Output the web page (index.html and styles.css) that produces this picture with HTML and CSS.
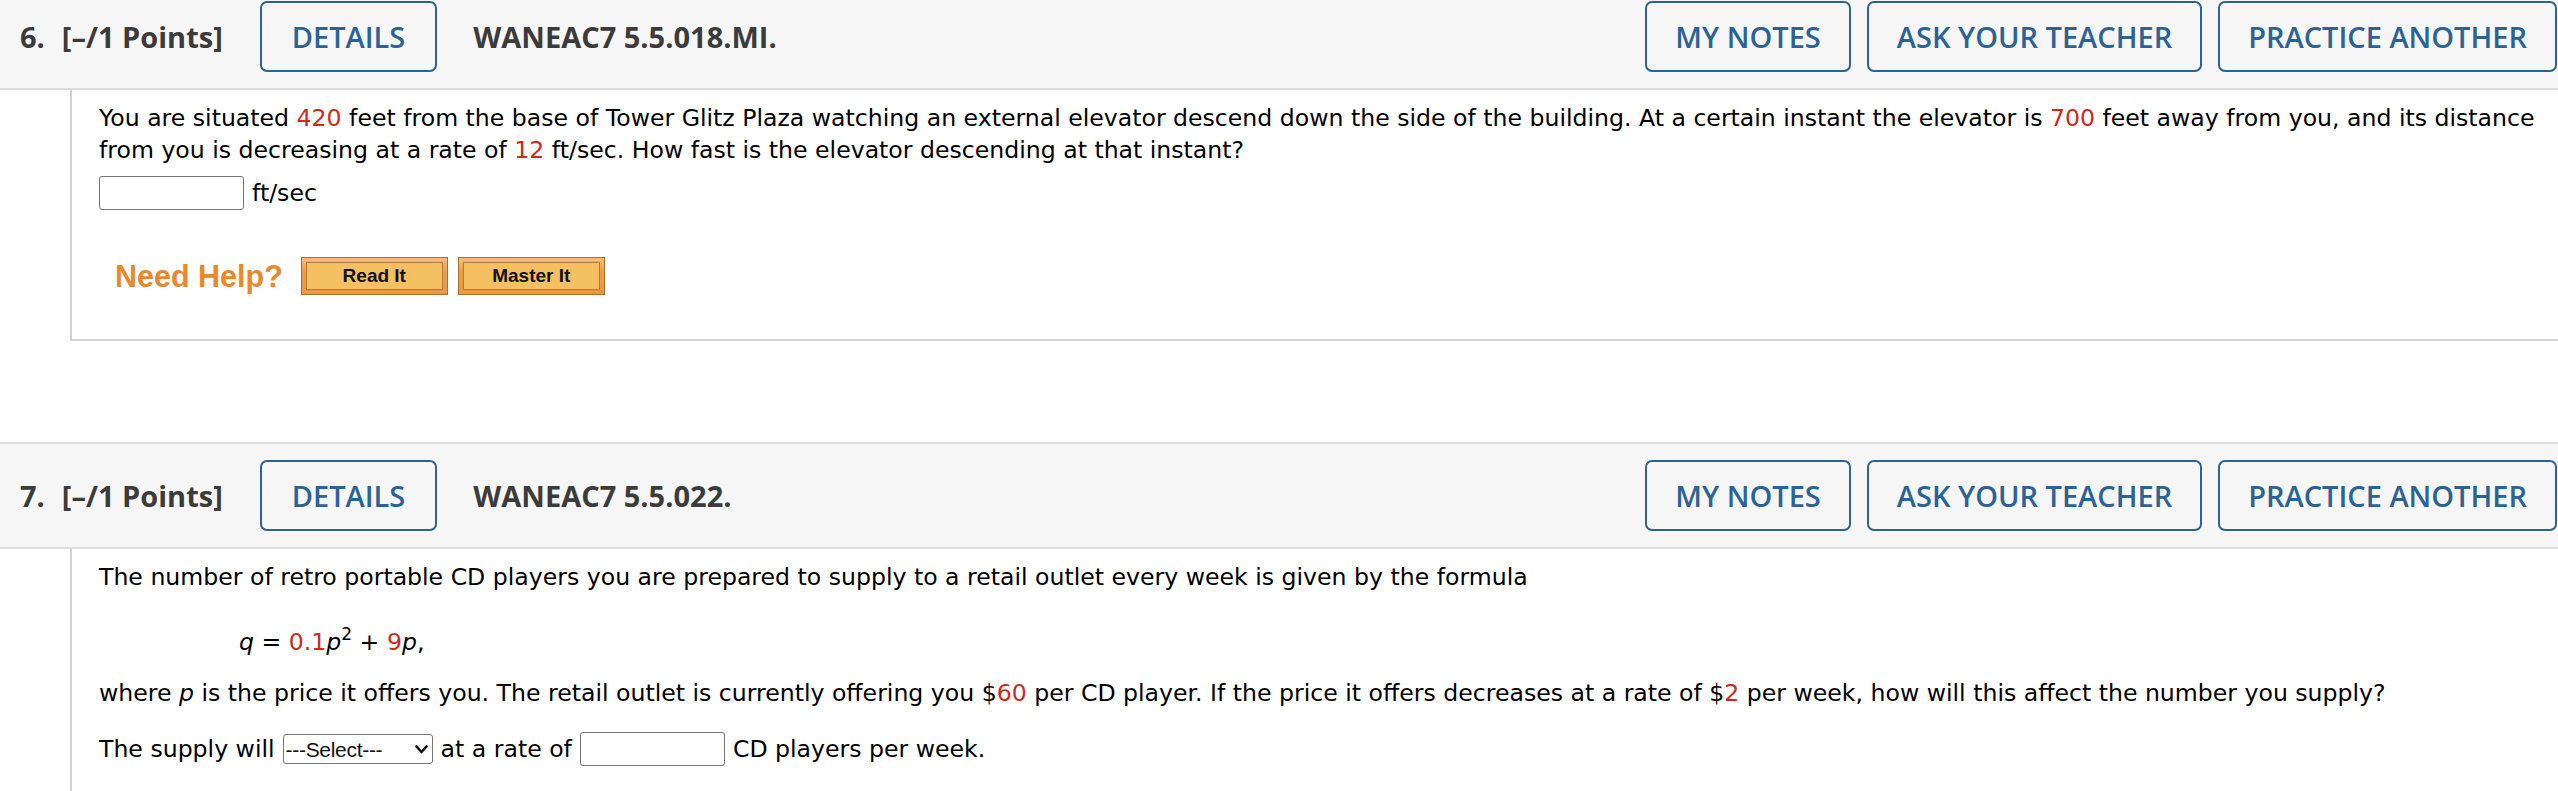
FILE: index.html
```html
<!DOCTYPE html>
<html>
<head>
<meta charset="utf-8">
<link rel="stylesheet" href="styles.css">
</head>
<body>
<div class="page">
  <section class="question first">
    <div class="qhead">
      <span class="qnum">6.</span>
      <span class="qpts">[–/1 Points]</span>
      <button class="hbtn">DETAILS</button>
      <span class="qid">WANEAC7 5.5.018.MI.</span>
      <div class="hright">
        <button class="hbtn">MY NOTES</button>
        <button class="hbtn">ASK YOUR TEACHER</button>
        <button class="hbtn">PRACTICE ANOTHER</button>
      </div>
    </div>
    <div class="qbody closed">
      <p class="txt">You are situated <span class="red">420</span> feet from the base of Tower Glitz Plaza watching an external elevator descend down the side of the building. At a certain instant the elevator is <span class="red">700</span> feet away from you, and its distance from you is decreasing at a rate of <span class="red">12</span> ft/sec. How fast is the elevator descending at that instant?</p>
      <div class="answer-row">
        <input class="ans" type="text">
        <span class="unit">ft/sec</span>
      </div>
      <div class="help-row">
        <span class="need">Need Help?</span>
        <span class="helpbtn"><span class="helpin">Read It</span></span>
        <span class="helpbtn"><span class="helpin">Master It</span></span>
      </div>
    </div>
  </section>

  <section class="question second">
    <div class="qhead">
      <span class="qnum">7.</span>
      <span class="qpts">[–/1 Points]</span>
      <button class="hbtn">DETAILS</button>
      <span class="qid">WANEAC7 5.5.022.</span>
      <div class="hright">
        <button class="hbtn">MY NOTES</button>
        <button class="hbtn">ASK YOUR TEACHER</button>
        <button class="hbtn">PRACTICE ANOTHER</button>
      </div>
    </div>
    <div class="qbody">
      <p class="txt p1">The number of retro portable CD players you are prepared to supply to a retail outlet every week is given by the formula</p>
      <div class="txt formula"><i>q</i> = <span class="red">0.1</span><i>p</i><sup>2</sup> + <span class="red">9</span><i>p</i>,</div>
      <p class="txt p3">where <i>p</i> is the price it offers you. The retail outlet is currently offering you $<span class="red">60</span> per CD player. If the price it offers decreases at a rate of $<span class="red">2</span> per week, how will this affect the number you supply?</p>
      <div class="supply-row">
        <span>The supply will</span>
        <span class="selwrap">
          <select class="sel"><option>---Select---</option><option>increase</option><option>decrease</option></select>
          <svg class="chev" width="13" height="9" viewBox="0 0 13 9"><path d="M1.5 1.5 L6.5 7 L11.5 1.5" fill="none" stroke="#111" stroke-width="2.6" stroke-linecap="round" stroke-linejoin="round"/></svg>
        </span>
        <span>at a rate of</span>
        <input class="ans" type="text">
        <span>CD players per week.</span>
      </div>
    </div>
  </section>
</div>
</body>
</html>
```

FILE: styles.css
```css
html, body {
  margin: 0;
  padding: 0;
  background: #ffffff;
}
body {
  overflow: hidden;
}
.page {
  width: 2558px;
}
.question.first {
  margin-top: -17px;
}
.question.second {
  margin-top: 101px;
}
.qhead {
  box-sizing: border-box;
  height: 107px;
  display: flex;
  align-items: center;
  background: #f6f6f6;
  border-top: 2px solid #dedede;
  border-bottom: 2px solid #dedede;
  padding: 0 1px 0 20px;
  font-family: "Open Sans", "Liberation Sans", sans-serif;
  color: #3b3b3b;
  font-size: 29px;
  font-weight: 700;
}
.qnum {
  margin-right: 17px;
}
.qpts {
  margin-right: 37px;
}
.qid {
  margin-left: 36px;
}
.hbtn {
  box-sizing: border-box;
  height: 71px;
  padding: 0 30px;
  border: 2px solid #2c6397;
  border-radius: 7px;
  background: transparent;
  color: #2c6397;
  font-family: "Open Sans", "Liberation Sans", sans-serif;
  font-size: 29px;
  font-weight: 600;
  cursor: pointer;
}
.hright .hbtn {
  padding: 0 28px;
}
.hright {
  margin-left: auto;
  display: flex;
  gap: 16px;
}
.qbody {
  margin-left: 70px;
  border-left: 2px solid #d2d2d2;
  padding: 12px 0 44px 27px;
  font-family: "DejaVu Sans", Verdana, sans-serif;
  font-size: 23.6px;
  line-height: 32px;
  color: #000;
}
.qbody.closed {
  border-bottom: 2px solid #d2d2d2;
}
.txt {
  margin: 0;
}
.red {
  color: #cc2a1e;
}
.answer-row {
  display: flex;
  align-items: center;
  margin-top: 10px;
  gap: 8px;
}
.ans {
  box-sizing: border-box;
  width: 145px;
  height: 34px;
  border: 1px solid #767676;
  border-radius: 3px;
  margin: 0;
  padding: 0 4px;
  background: #fff;
}
.help-row {
  display: flex;
  align-items: center;
  margin-top: 47px;
  padding-left: 16px;
}
.need {
  font-family: "Liberation Sans", Arial, sans-serif;
  font-weight: 700;
  font-size: 30.5px;
  color: #e8892d;
  margin-right: 18px;
}
.helpbtn {
  box-sizing: border-box;
  width: 147px;
  height: 38px;
  border: 1px solid #a8702f;
  background: linear-gradient(#f8bd79, #ef9b45 40%, #ee9640);
  padding: 4px;
  margin-right: 10px;
  display: flex;
}
.helpin {
  flex: 1;
  border: 1px solid #b0783a;
  background: #f4c062;
  display: flex;
  align-items: center;
  justify-content: center;
  font-family: "Liberation Sans", Arial, sans-serif;
  font-weight: 700;
  font-size: 19px;
  color: #111;
}
.p1 {
  margin-bottom: 33px;
}
.formula {
  margin-left: 140px;
  margin-bottom: 19px;
}
.formula sup {
  font-size: 17px;
  line-height: 0;
  vertical-align: 10px;
}
.supply-row {
  display: flex;
  align-items: center;
  margin-top: 23px;
  gap: 8px;
}
.selwrap {
  position: relative;
  display: flex;
}
.sel {
  box-sizing: border-box;
  width: 150px;
  height: 30px;
  font-family: "Liberation Sans", Arial, sans-serif;
  font-size: 21px;
  letter-spacing: -0.3px;
  border: 1px solid #767676;
  border-radius: 3px;
  background: #fff;
  color: #111;
  margin: 0;
  padding: 0 20px 0 2px;
  -webkit-appearance: none;
  appearance: none;
}
.chev {
  position: absolute;
  right: 5px;
  top: 11px;
  pointer-events: none;
}
```
